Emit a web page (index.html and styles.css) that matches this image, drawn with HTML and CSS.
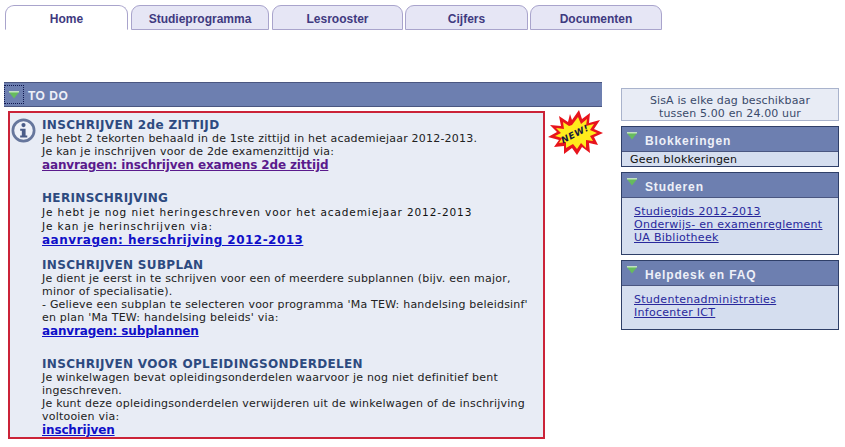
FILE: index.html
```html
<!DOCTYPE html>
<html lang="en">
<head>
  <meta charset="UTF-8" />
  <title>SisA - Home</title>
  <link rel="stylesheet" href="styles.css">
</head>
<body>
  <ul class="tabs">
    <li class="tab tab-home active">Home</li>
    <li class="tab tab-studie">Studieprogramma</li>
    <li class="tab tab-les">Lesrooster</li>
    <li class="tab tab-cijfers">Cijfers</li>
    <li class="tab tab-docs">Documenten</li>
  </ul>

  <div class="page">
    <div class="main">
      <div class="todo-bar">
        <span class="toggle"><svg class="arrow" viewBox="0 0 12 8"><path d="M0.5 0.5 H11.5 L6 7.5 Z" fill="#66bb5e"/><path d="M1 0.8 H11" stroke="#d8f0d2" stroke-width="1.2"/></svg></span>
        <span class="todo-title">TO DO</span>
      </div>
      <div class="todo-box">
        <svg class="info" viewBox="0 0 24 24">
          <circle cx="12" cy="12" r="10.2" fill="#eef1f8" stroke="#66769c" stroke-width="2.6"/>
          <circle cx="12" cy="6.8" r="2" fill="#4a5c88"/>
          <path d="M8.8 10.2 H14 V16.8 H15.6 V18.8 H8.8 V16.8 H10.4 V12.2 H8.8 Z" fill="#4a5c88"/>
        </svg>

        <section class="item item-first">
          <h3>INSCHRIJVEN 2de ZITTIJD</h3>
          <p>Je hebt 2 tekorten behaald in de 1ste zittijd in het academiejaar 2012-2013.<br>Je kan je inschrijven voor de 2de examenzittijd via:</p>
          <a class="action visited" href="#">aanvragen: inschrijven examens 2de zittijd</a>
        </section>

        <section class="item item-second">
          <h3>HERINSCHRIJVING</h3>
          <p class="tight">Je hebt je nog niet heringeschreven voor het academiejaar 2012-2013<br>Je kan je herinschrijven via:</p>
          <a class="action action-wide" href="#">aanvragen: herschrijving 2012-2013</a>
        </section>

        <section class="item item-third">
          <h3>INSCHRIJVEN SUBPLAN</h3>
          <p>Je dient je eerst in te schrijven voor een of meerdere subplannen (bijv. een major,<br>minor of specialisatie).<br>- Gelieve een subplan te selecteren voor programma 'Ma TEW: handelsing beleidsinf'<br>en plan 'Ma TEW: handelsing beleids' via:</p>
          <a class="action" href="#">aanvragen: subplannen</a>
        </section>

        <section class="item item-fourth">
          <h3>INSCHRIJVEN VOOR OPLEIDINGSONDERDELEN</h3>
          <p>Je winkelwagen bevat opleidingsonderdelen waarvoor je nog niet definitief bent<br>ingeschreven.<br>Je kunt deze opleidingsonderdelen verwijderen uit de winkelwagen of de inschrijving<br>voltooien via:</p>
          <a class="action" href="#">inschrijven</a>
        </section>

        <svg class="new-badge" viewBox="0 0 56 46">
          <polygon fill="#e8141c" points="24,10 31,0 34,9 42,3 41,13 52,10 46,19 55,23 46,27 50,35 41,33 42,43 34,37 29,45 24,38 16,44 16,36 6,37 11,30 0,27 9,22 2,15 13,16 11,6 20,12 22,4"/>
          <polygon fill="#ffec1c" points="24,15 30,7 33,14 39,9 38,16 46,14 42,20 49,23 42,26 45,31 38,30 38,38 33,33 29,39 25,34 18,38 18,32 11,33 14,28 7,26 13,23 8,18 16,19 15,12 21,16"/>
          <text class="new-text" x="27" y="27" text-anchor="middle" transform="rotate(-27 27 24)">NEW!</text>
        </svg>
      </div>
    </div>

    <div class="side">
      <div class="notice">SisA is elke dag beschikbaar<br>tussen 5.00 en 24.00 uur</div>

      <div class="panel panel-block">
        <div class="panel-head">
          <svg class="arrow" viewBox="0 0 12 8"><path d="M0.5 0.5 H11.5 L6 7.5 Z" fill="#66bb5e"/><path d="M1 0.8 H11" stroke="#d8f0d2" stroke-width="1.2"/></svg>
          <span>Blokkeringen</span>
        </div>
        <div class="panel-plain">Geen blokkeringen</div>
      </div>

      <div class="panel panel-study">
        <div class="panel-head">
          <svg class="arrow" viewBox="0 0 12 8"><path d="M0.5 0.5 H11.5 L6 7.5 Z" fill="#66bb5e"/><path d="M1 0.8 H11" stroke="#d8f0d2" stroke-width="1.2"/></svg>
          <span>Studeren</span>
        </div>
        <div class="panel-links panel-links-3">
          <a href="#">Studiegids 2012-2013</a>
          <a href="#">Onderwijs- en examenreglement</a>
          <a href="#">UA Bibliotheek</a>
        </div>
      </div>

      <div class="panel">
        <div class="panel-head">
          <svg class="arrow" viewBox="0 0 12 8"><path d="M0.5 0.5 H11.5 L6 7.5 Z" fill="#66bb5e"/><path d="M1 0.8 H11" stroke="#d8f0d2" stroke-width="1.2"/></svg>
          <span>Helpdesk en FAQ</span>
        </div>
        <div class="panel-links panel-links-2">
          <a href="#">Studentenadministraties</a>
          <a href="#">Infocenter ICT</a>
        </div>
      </div>
    </div>
  </div>
</body>
</html>
```

FILE: styles.css
```css
* {
  margin: 0;
  padding: 0;
  box-sizing: border-box;
}
body {
  background: white;
  color: #222;
  font-family: 'DejaVu Sans', Verdana, sans-serif;
  font-size: 11px;
  line-height: 13px;
  letter-spacing: 0.21px;
  overflow: hidden;
}
.tabs {
  display: flex;
  list-style: none;
  padding: 5px 0 0 5px;
  height: 30px;
}
.tab {
  height: 25px;
  margin-right: 3px;
  background: #e6e6f5;
  border: 1px solid #a9a4cc;
  border-radius: 9px 9px 0 0;
  color: #3f3a80;
  font-family: 'Liberation Sans', Arial, sans-serif;
  font-size: 12px;
  font-weight: bold;
  line-height: 27px;
  text-align: center;
  letter-spacing: 0;
}
.tab.active {
  background: white;
  border-bottom-color: white;
}
.tab-home { width: 123px; }
.tab-studie { width: 138px; }
.tab-les { width: 131px; margin-right: 2px; }
.tab-cijfers { width: 123px; margin-right: 2px; }
.tab-docs { width: 132px; }

.page {
  display: flex;
  padding: 52px 0 0 4px;
}
.main {
  width: 598px;
}
.todo-bar {
  display: flex;
  align-items: center;
  height: 25px;
  background: #6d7fb0;
  border-top: 1px solid #4a5680;
  border-bottom: 1px solid #4a5680;
}
.toggle {
  display: flex;
  justify-content: center;
  width: 20px;
  height: 19px;
  margin-right: 4px;
  padding-top: 5px;
  border: 1px dotted #101850;
}
.todo-title {
  color: #eef0f8;
  font-family: 'Liberation Sans', Arial, sans-serif;
  font-size: 12px;
  font-weight: bold;
  letter-spacing: 0.5px;
  padding-top: 4px;
}
.arrow {
  width: 12px;
  height: 8px;
  display: block;
}
.todo-box {
  position: relative;
  width: 537px;
  height: 328px;
  margin: 4px 0 0 4px;
  background: #e8ecf5;
  border: 2px solid #cb2338;
  padding: 5px 0 0 32px;
}
.info {
  position: absolute;
  left: 1px;
  top: 5px;
  width: 25px;
  height: 25px;
}
.item h3 {
  color: #2d4a80;
  font-size: 12px;
  font-weight: bold;
  line-height: 14px;
  letter-spacing: 0.33px;
}
.item p {
  color: #222;
}
.item .tight {
  color: #111;
  font-size: 10.5px;
  line-height: 14px;
  letter-spacing: 0.9px;
}
.action {
  display: block;
  color: #1010c8;
  font-size: 12px;
  font-weight: bold;
  line-height: 14px;
  letter-spacing: -0.14px;
}
.action.visited {
  color: #5a1a8c;
}
.action-wide {
  letter-spacing: 0.47px;
}
.item-second { margin-top: 19px; }
.item-third { margin-top: 11px; }
.item-fourth { margin-top: 19px; }

.new-badge {
  position: absolute;
  left: 538px;
  top: -3px;
  width: 56px;
  height: 46px;
}
.new-text {
  font-family: 'DejaVu Sans', sans-serif;
  font-size: 9px;
  font-weight: bold;
  font-style: italic;
  letter-spacing: 0.6px;
  fill: #16163c;
}

.side {
  width: 218px;
  margin: 6px 0 0 19px;
}
.notice {
  height: 33px;
  padding-top: 5px;
  background: #e8ecf5;
  border: 1px solid #a9b3cc;
  color: #3a4a6a;
  text-align: center;
  letter-spacing: 0.14px;
}
.panel {
  margin-top: 5px;
  background: #d5deef;
  border: 1px solid #2f3f68;
}
.panel-head {
  display: flex;
  align-items: flex-start;
  height: 25px;
  padding: 5px 0 0 4px;
  background: #6d7fb0;
  border-bottom: 1px solid #4a5680;
  color: #eef0f8;
  font-family: 'Liberation Sans', Arial, sans-serif;
  font-size: 12px;
  font-weight: bold;
  letter-spacing: 0.85px;
}
.panel-head span {
  margin: 3px 0 0 7px;
}
.panel-plain {
  height: 14px;
  padding: 1px 0 0 8px;
  color: #111;
}
.panel-links {
  padding: 7px 0 0 12px;
  letter-spacing: 0.28px;
}
.panel-links a {
  display: block;
  color: #28289c;
}
.panel-links-3 { height: 56px; }
.panel-links-2 { height: 43px; }
```
